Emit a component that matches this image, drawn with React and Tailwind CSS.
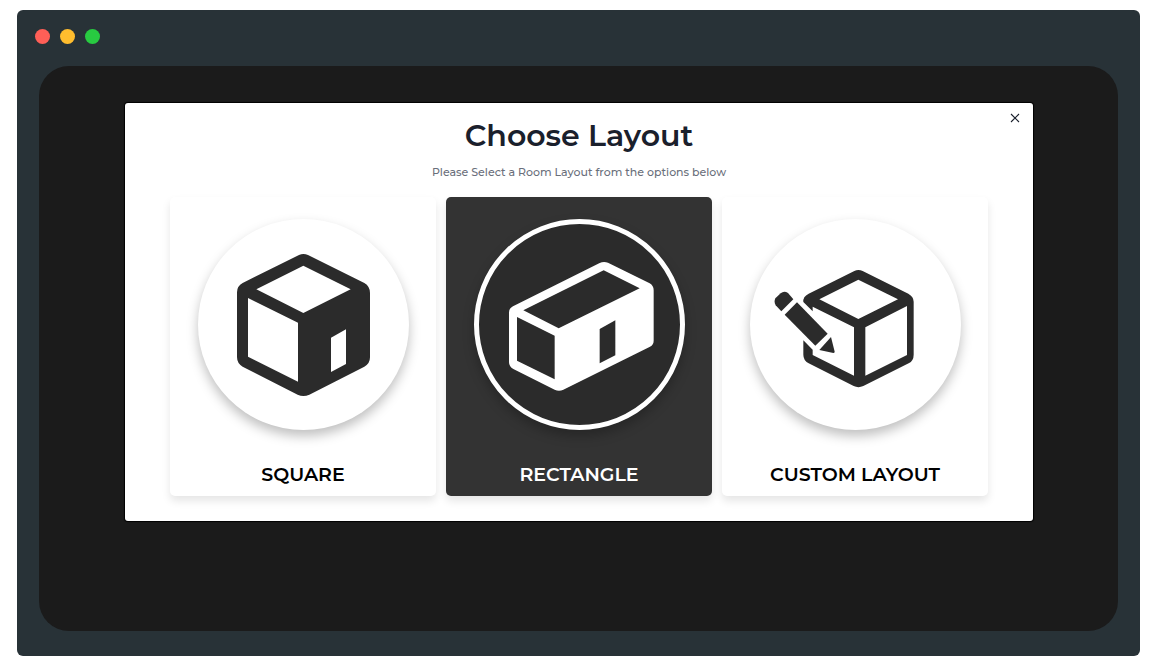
import { useState } from "react";

function SquareRoomIcon() {
  return (
    <svg viewBox="54 57 633 633" className="size-full" aria-hidden="true">
      <path
        fill="currentColor"
        fillRule="evenodd"
        d="M357 165Q370 159 384 165L553 249Q570 259 570 279V472Q570 491 553 500L388 584Q370 592 353 584L188 500Q171 490 171 471V277Q171 258 188 249ZM370 197L229 268L370 339L512 268ZM204 294V470L354 545V368ZM453 413V516L498 492V388Z"
      />
    </svg>
  );
}

function RectangleRoomIcon() {
  return (
    <svg viewBox="72 57 633 633" className="size-full" aria-hidden="true">
      <path
        fill="currentColor"
        fillRule="evenodd"
        d="M449 189Q461 183 474 188L599 250Q611 257 611 271V422Q611 434 600 440L340 569Q327 575 314 569L190 507Q177 500 177 487V338Q177 325 189 319ZM461 211L220 331L326 385L569 265ZM201 351V482L314 538V407ZM449 387V490L496 466V361Z"
      />
    </svg>
  );
}

function CustomLayoutIcon() {
  return (
    <svg viewBox="59 57 633 633" className="size-full" aria-hidden="true">
      <g fill="currentColor">
        <path
          fillRule="evenodd"
          d="M372 213Q384 207 397 213L534 281Q550 290 550 305V464Q550 482 535 490L399 558Q384 565 370 558L235 490Q219 481 219 464V421L247 449V465L371 527V382L247 320V334L219 306Q217 290 235 281ZM384 239L267 298L384 357L503 298ZM405 382V527L530 465V318Z"
        />
        <path d="M135 295L151 280Q161 271 173 279L189 298L153 334L136 316Q130 305 135 295Z" />
        <path d="M200 307L292 401L255 437L163 344Z" />
        <path d="M302 411L313 455Q313 459 309 459L267 450Z" />
      </g>
    </svg>
  );
}

const layouts = [
  { id: "square", label: "SQUARE", Icon: SquareRoomIcon },
  { id: "rectangle", label: "RECTANGLE", Icon: RectangleRoomIcon },
  { id: "custom", label: "CUSTOM LAYOUT", Icon: CustomLayoutIcon },
];

function LayoutCard({ label, Icon, selected, onSelect }) {
  return (
    <button
      type="button"
      aria-pressed={selected}
      onClick={onSelect}
      className={`flex flex-col items-center rounded-[5px] px-4 pt-[22px] pb-[7px] shadow-[0_5px_8px_rgba(0,0,0,0.1)] ${
        selected ? "bg-[#333333] text-white" : "bg-white text-black"
      }`}
    >
      <span
        className={`relative block aspect-square w-full max-w-[211px] rounded-full shadow-[0_6px_12px_rgba(0,0,0,0.25)] ${
          selected ? "bg-[#2b2b2b] text-white" : "bg-white text-[#2b2b2b]"
        }`}
      >
        <Icon />
        {selected && <span className="absolute inset-0 rounded-full border-[5px] border-white" />}
      </span>
      <span className="mt-[31px] text-[19px] leading-7 font-semibold">{label}</span>
    </button>
  );
}

export default function App() {
  const [selected, setSelected] = useState("rectangle");

  return (
    <div className="flex min-h-screen flex-col bg-white px-[17px] pt-[10px] pb-2 font-['Montserrat','Inter',sans-serif]">
      <div className="flex flex-1 flex-col rounded-md bg-[#283237] px-[22px] pb-[25px]">
        <div className="-ml-1 flex h-14 items-center gap-[10px] pb-1">
          <span className="size-[15px] rounded-full bg-[#ff5f57]" />
          <span className="size-[15px] rounded-full bg-[#ffbd2e]" />
          <span className="size-[15px] rounded-full bg-[#28ca41]" />
        </div>
        <main className="flex-1 rounded-[30px] bg-[#1b1b1b] pt-[37px] pr-[85px] pb-[37px] pl-[86px]">
          <section
            role="dialog"
            aria-labelledby="layout-title"
            className="relative rounded-[3px] bg-white px-[45px] pt-[13px] pb-[25px] text-center shadow-[0_0_1px_1px_#000000]"
          >
            <button
              type="button"
              aria-label="Close"
              className="absolute top-[7px] right-[10px] flex size-4 items-center justify-center p-1 text-[#1a202c]"
            >
              <svg viewBox="0 0 8 8" className="size-2 shrink-0 overflow-visible" aria-hidden="true">
                <path d="M0 0L8 8M8 0L0 8" stroke="currentColor" strokeWidth="1.1" />
              </svg>
            </button>
            <h1 id="layout-title" className="text-[30px] leading-10 font-semibold text-[#1a202c]">
              Choose Layout
            </h1>
            <p className="mt-[6px] text-[11px] leading-5 font-medium text-[#6a6f7b]">
              Please Select a Room Layout from the options below
            </p>
            <div className="mt-[15px] grid grid-cols-3 gap-[10px]">
              {layouts.map(({ id, label, Icon }) => (
                <LayoutCard
                  key={id}
                  label={label}
                  Icon={Icon}
                  selected={selected === id}
                  onSelect={() => setSelected(id)}
                />
              ))}
            </div>
          </section>
        </main>
      </div>
    </div>
  );
}
